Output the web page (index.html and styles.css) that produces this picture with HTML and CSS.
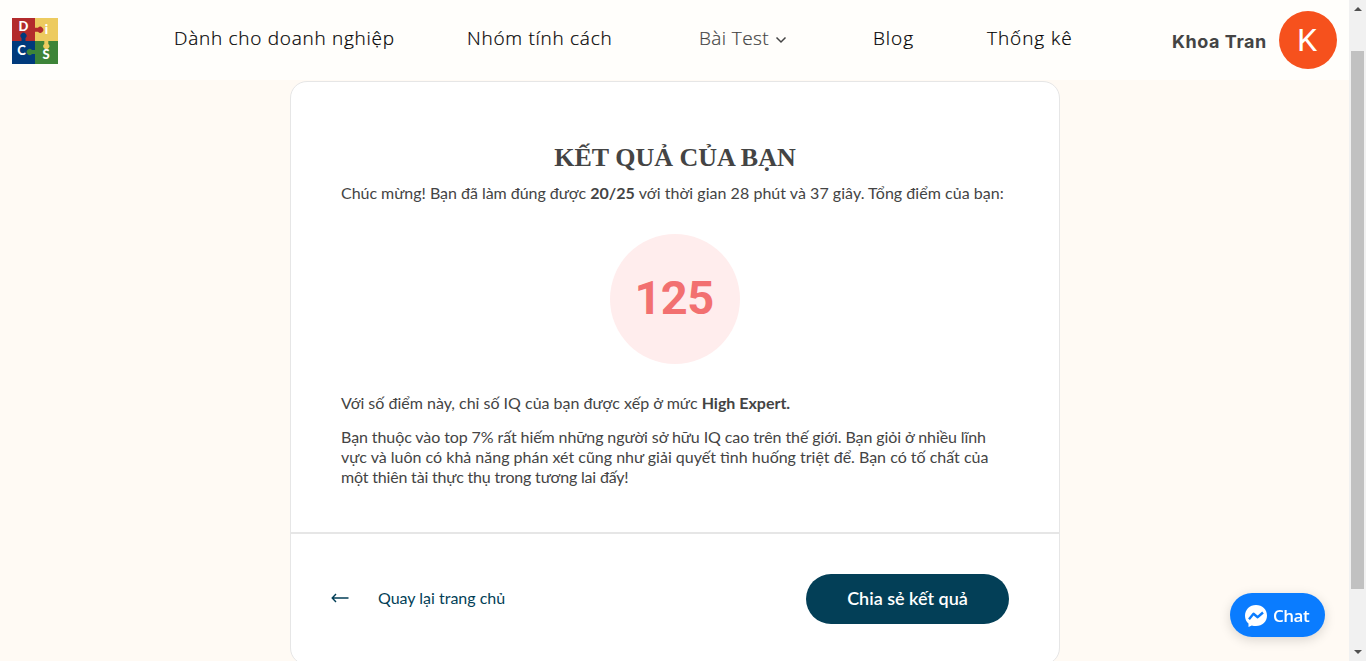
FILE: index.html
```html
<!DOCTYPE html>
<html lang="vi">
<head>
<meta charset="utf-8">
<title>Kết quả của bạn</title>
<link rel="stylesheet" href="styles.css">
</head>
<body>
<div class="page">
  <header class="header">
    <svg class="logo" viewBox="0 0 46 46">
      <rect width="23" height="23" fill="#b32b2c"/>
      <rect x="23" width="23" height="23" fill="#edcb5f"/>
      <rect y="23" width="23" height="23" fill="#003a7c"/>
      <rect x="23" y="23" width="23" height="23" fill="#3d8438"/>
      <path d="M22 9.800h4a3 3 0 1 1 0 4H22z" fill="#b32b2c"/>
      <path d="M9.500 24v-4a3 3 0 1 1 4 0V24z" fill="#003a7c"/>
      <path d="M32.300 22v4a3 3 0 1 0 4 0v-4z" fill="#edcb5f"/>
      <path d="M24 32h-4a3 3 0 1 0 0 4H24z" fill="#3d8438"/>
      <g class="logo-letters">
        <text x="11.500" y="13">D</text>
        <text x="34.500" y="16">i</text>
        <text x="9.500" y="37.300">C</text>
        <text x="34.200" y="41">S</text>
      </g>
    </svg>
    <nav class="nav">
      <a>Dành cho doanh nghiệp</a>
      <a>Nhóm tính cách</a>
      <a class="menu">Bài Test<svg class="chevron" viewBox="0 0 12 8"><path d="M1.500 1.500 6 6l4.500-4.500"/></svg></a>
      <a>Blog</a>
      <a>Thống kê</a>
    </nav>
    <div class="user"><span class="user-name">Khoa Tran</span><span class="avatar">K</span></div>
  </header>
  <main class="card">
    <section class="result">
      <h1>KẾT QUẢ CỦA BẠN</h1>
      <p class="summary">Chúc mừng! Bạn đã làm đúng được <b>20/25</b> <span class="time">với thời gian 28 phút và 37 giây. Tổng điểm của bạn:</span></p>
      <div class="score">125</div>
      <p class="level">Với số điểm này, chỉ số IQ của bạn được xếp ở mức <b>High Expert.</b></p>
      <p class="detail">Bạn thuộc vào top 7% rất hiếm những người sở hữu IQ cao trên thế giới. Bạn giỏi ở nhiều lĩnh<br><span class="loose">vực và luôn có khả năng phán xét cũng như giải quyết tình huống triệt để. Bạn có tố chất của</span><br><span class="tight">một thiên tài thực thụ trong tương lai đấy!</span></p>
    </section>
    <footer class="actions">
      <a class="back"><svg class="arrow" viewBox="0 0 18 10"><path d="M17.500 5H1.500M5 1 1.200 5 5 9"/></svg>Quay lại trang chủ</a>
      <button class="share">Chia sẻ kết quả</button>
    </footer>
  </main>
  <div class="chat">
    <svg class="messenger" viewBox="0 0 24 24"><path fill="#fff" d="M12 1C5.600 1 1 5.600 1 11.700c0 3.200 1.300 5.900 3.500 7.800v3.600l3.300-1.700c1.300.4 2.700.6 4.200.6 6.400 0 11-4.500 11-10.500S18.400 1 12 1z"/><path fill="none" stroke="#0a7cff" stroke-width="2.400" stroke-linejoin="round" d="m5 15.200 4.500-5.400 4.200 3.400 5.300-4.700"/></svg>
    <span>Chat</span>
  </div>
</div>
<div class="scrollbar"><i class="up"></i><i class="thumb"></i><i class="down"></i></div>
</body>
</html>
```
FILE: styles.css
```css
* { box-sizing: border-box; }
body {
  margin: 0;
  height: 661px;
  display: flex;
  overflow: hidden;
  font: 16px/20px Lato, "Noto Sans", sans-serif;
  color: #444;
  background: #fffaf4;
}
.page { width: 1349px; height: 661px; overflow: hidden; }
.header {
  height: 80px;
  display: flex;
  background: #fffefb;
}
.logo { flex: none; width: 46px; height: 46px; margin: 18px 0 0 12px; }
.logo-letters { font: 900 13px Lato, sans-serif; fill: #fff; text-anchor: middle; }
.nav {
  width: 1002px;
  margin-left: 116px;
  margin-right: 1px;
  display: flex;
  padding-top: 25px;
  font: 300 19px/26px "Open Sans", sans-serif;
  letter-spacing: 0.73px;
  color: #000;
  -webkit-text-stroke: 0.2px;
  white-space: nowrap;
}
.nav a:nth-child(1) { width: 293px; }
.nav a:nth-child(2) { width: 232px; }
.nav a:nth-child(3) { width: 174px; }
.nav a:nth-child(4) { width: 114px; }
.nav a:nth-child(n+4) { letter-spacing: 0.95px; }
.nav .menu { color: #444; letter-spacing: 0.4px; }
.chevron { width: 12px; height: 8px; margin-left: 6px; margin-bottom: 1px; fill: none; stroke: #444; stroke-width: 1.5; }
.user { display: flex; margin-left: -5px; padding-top: 11px; }
.user-name {
  width: 107px;
  padding-top: 18px;
  font: 700 18px/26px Inter, sans-serif;
  letter-spacing: 0.55px;
  white-space: nowrap;
}
.avatar {
  flex: none;
  width: 58px;
  height: 58px;
  border-radius: 50%;
  background: #f6511d;
  color: #fff;
  font: 400 32px/59px Roboto, sans-serif;
  text-align: center;
  padding-right: 2px;
}
.card {
  width: 770px;
  height: 584px;
  margin: 1px auto 0 290px;
  background: #fff;
  border: 1px solid #e6e6e6;
  border-radius: 17px;
}
.result {
  height: 452px;
  padding: 61px 49px 0;
  border-bottom: 2px solid #e6e6e6;
}
h1 { margin: 0 0 10px; font: 700 26px/30px "Liberation Serif", serif; text-align: center; }
p { margin: 0; white-space: nowrap; }
.summary { padding-left: 1px; letter-spacing: -0.03px; }
.time { letter-spacing: 0.04px; }
.score {
  width: 130px;
  height: 130px;
  margin: 31px auto 29px;
  padding-right: 2px;
  border-radius: 50%;
  background: #ffeded;
  color: #f27070;
  font: 700 47px/127px Roboto, sans-serif;
  letter-spacing: -0.6px;
  text-align: center;
}
.level { padding-left: 1px; }
.detail { margin-top: 14px; padding-left: 1px; letter-spacing: -0.09px; }
.loose { letter-spacing: 0; }
.tight { letter-spacing: -0.18px; }
.actions {
  height: 130px;
  display: flex;
  align-items: center;
  justify-content: space-between;
  padding: 0 50px 0 40px;
}
.back { display: flex; align-items: center; gap: 29px; padding-bottom: 2px; color: #033f57; }
.arrow { width: 18px; height: 10px; fill: none; stroke: currentColor; stroke-width: 1.4; }
.share {
  width: 203px;
  height: 50px;
  padding-bottom: 4px;
  border: 0;
  border-radius: 25px;
  background: #033f57;
  color: #fff;
  font: 600 18px/20px Lato, sans-serif;
  letter-spacing: 0;
}
.chat {
  position: fixed;
  left: 1230px;
  top: 593px;
  width: 95px;
  height: 44px;
  border-radius: 22px;
  background: #0a7cff;
  color: #fff;
  box-shadow: 0 3px 12px rgba(0, 0, 0, 0.15);
  display: flex;
  align-items: center;
  padding: 2px 0 0 14px;
  gap: 5px;
  font: 600 17px/24px "Open Sans", sans-serif;
  letter-spacing: -0.5px;
}
.messenger { width: 24px; height: 24px; }
.scrollbar {
  width: 17px;
  height: 661px;
  background: #f1f1f1;
  display: flex;
  flex-direction: column;
  align-items: center;
}
.up { margin-top: 7px; border: 4px solid transparent; border-top: 0; border-bottom-color: #505050; }
.thumb { width: 13px; height: 538px; margin-top: 40px; background: #c1c1c1; }
.down { margin-top: 61px; border: 4px solid transparent; border-bottom: 0; border-top-color: #505050; }
```
